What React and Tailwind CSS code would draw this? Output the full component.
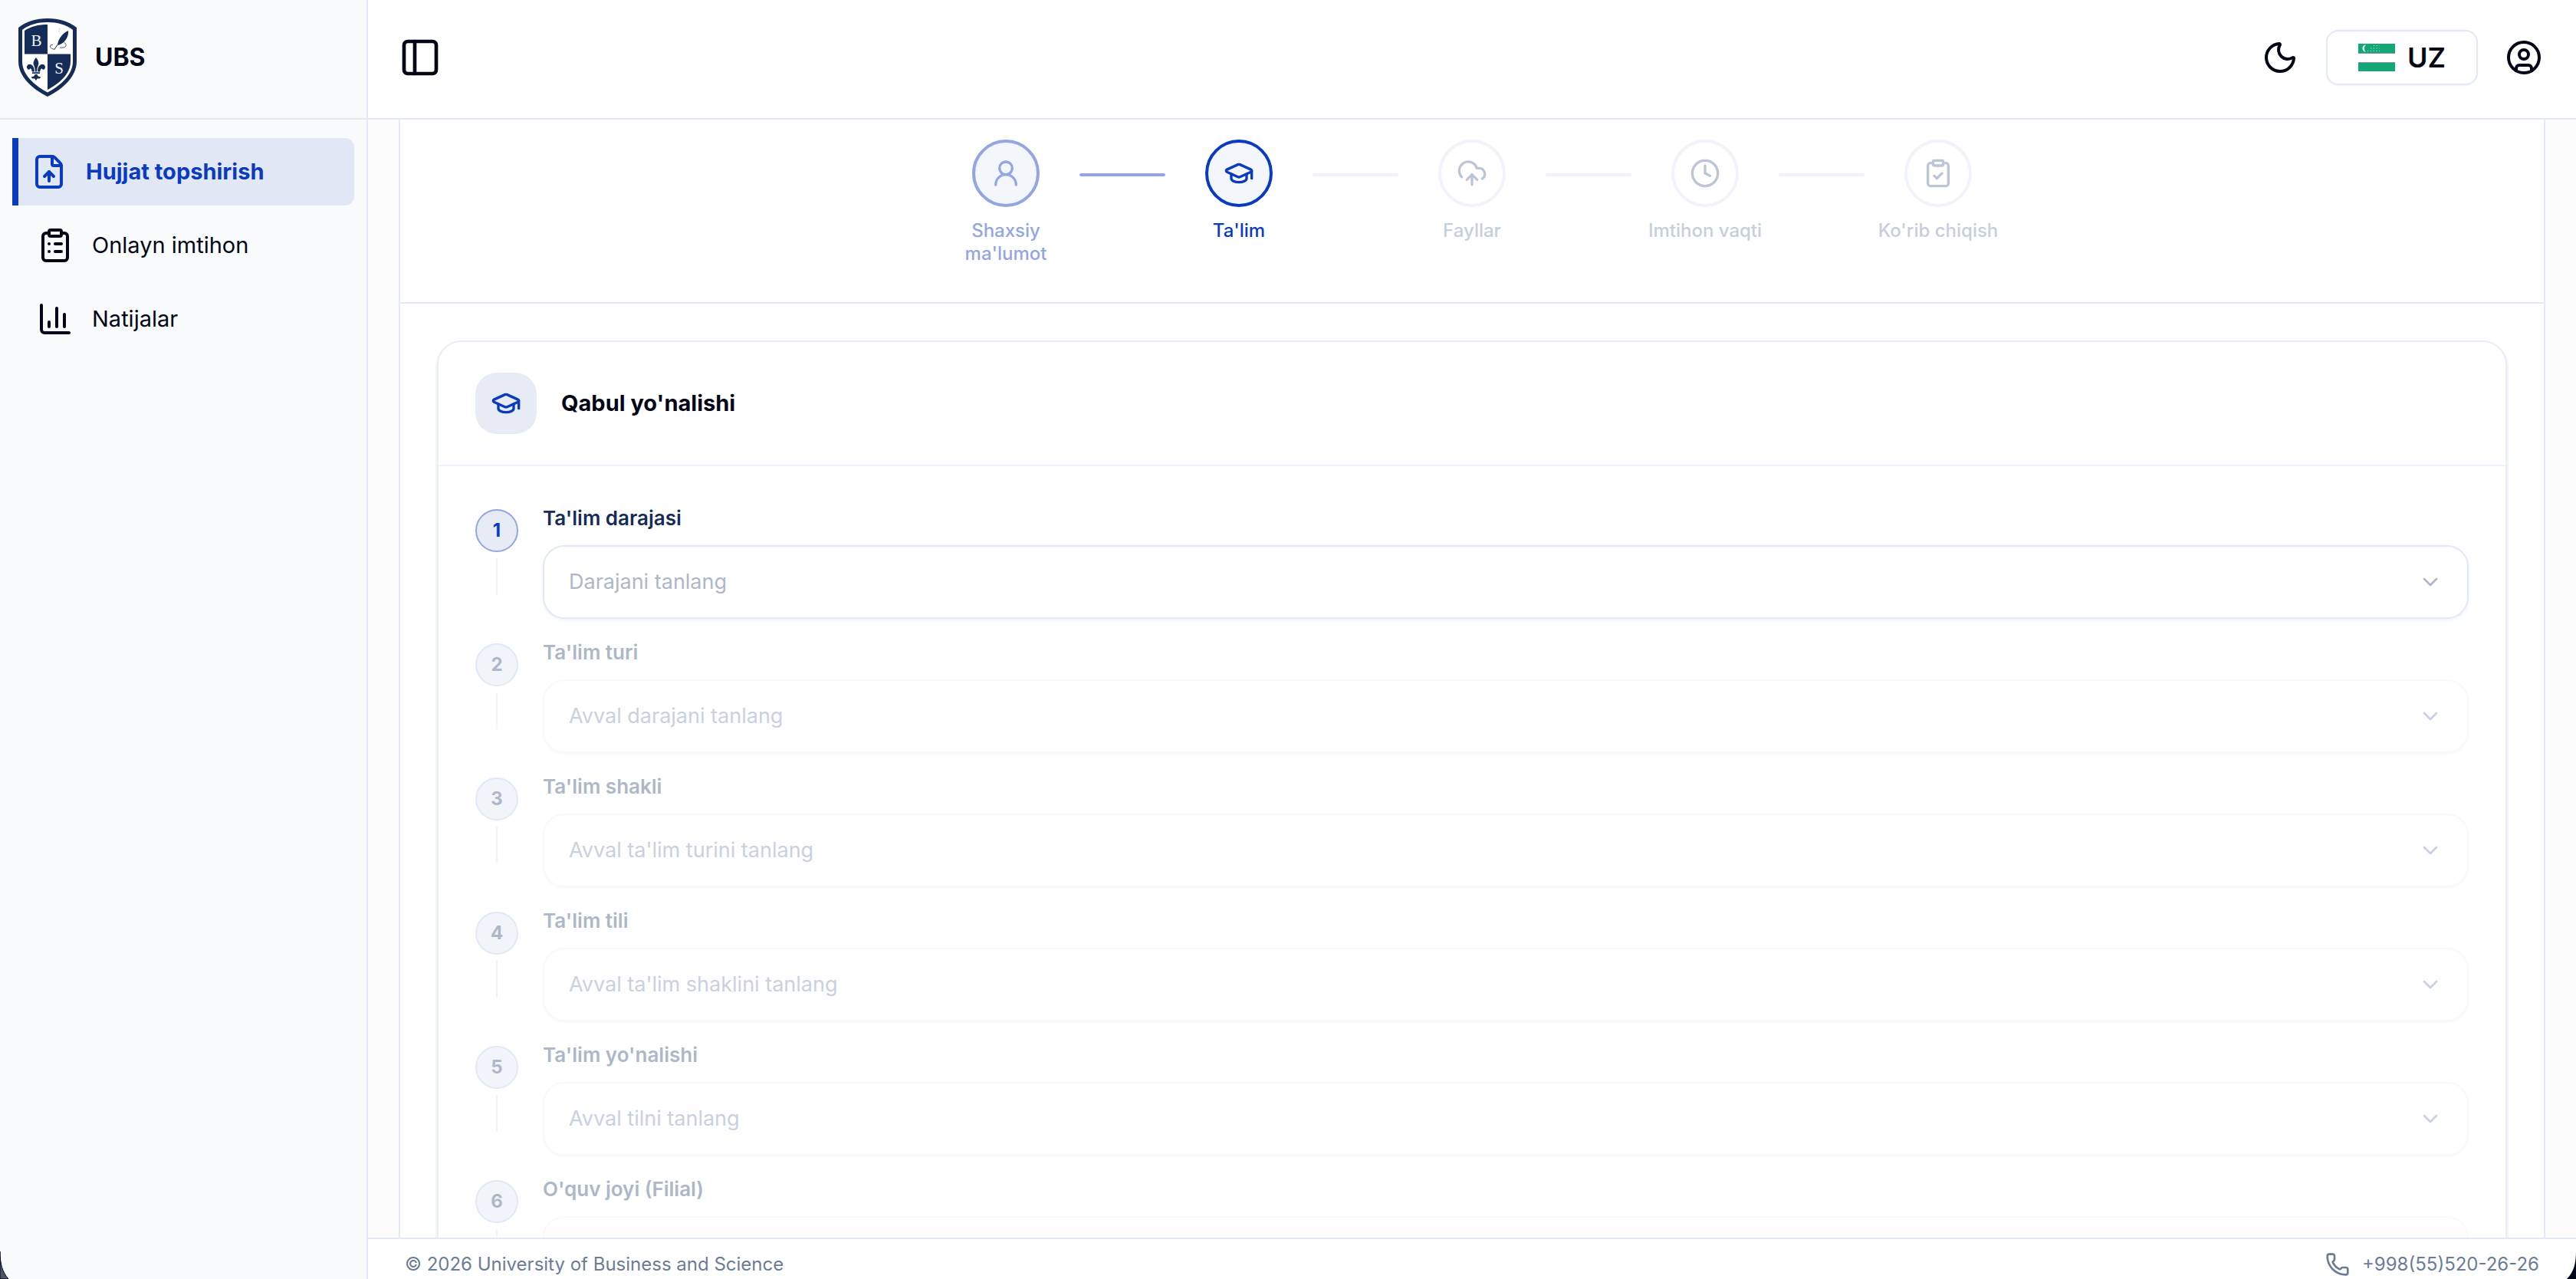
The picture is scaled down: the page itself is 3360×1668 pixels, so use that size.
import {
  ChartColumn,
  ChevronDown,
  CircleUser,
  ClipboardCheck,
  ClipboardList,
  Clock,
  CloudUpload,
  FileUp,
  GraduationCap,
  Moon,
  PanelLeft,
  Phone,
  UserRound,
} from 'lucide-react';
import clsx from 'clsx';

const NAV = [
  { label: 'Hujjat topshirish', icon: FileUp, active: true },
  { label: 'Onlayn imtihon', icon: ClipboardList },
  { label: 'Natijalar', icon: ChartColumn },
];

const STEPS = [
  { label: "Shaxsiy ma'lumot", icon: UserRound, state: 'done' },
  { label: "Ta'lim", icon: GraduationCap, state: 'current' },
  { label: 'Fayllar', icon: CloudUpload, state: 'todo' },
  { label: 'Imtihon vaqti', icon: Clock, state: 'todo' },
  { label: "Ko'rib chiqish", icon: ClipboardCheck, state: 'todo' },
];

const FIELDS = [
  { id: 'degree', label: "Ta'lim darajasi", placeholder: 'Darajani tanlang' },
  { id: 'type', label: "Ta'lim turi", placeholder: 'Avval darajani tanlang' },
  { id: 'form', label: "Ta'lim shakli", placeholder: "Avval ta'lim turini tanlang" },
  { id: 'language', label: "Ta'lim tili", placeholder: "Avval ta'lim shaklini tanlang" },
  { id: 'program', label: "Ta'lim yo'nalishi", placeholder: 'Avval tilni tanlang' },
  { id: 'branch', label: "O'quv joyi (Filial)", placeholder: "Avval yo'nalishni tanlang" },
];

const CIRCLE = {
  done: 'border-[#93a6e2] bg-[#f3f6fb] text-[#93a6e2]',
  current: 'border-[#0a3bbf] bg-[#f3f6fb] text-[#0a3bbf]',
  todo: 'border-[#f0f3f9] bg-white text-[#bcc5d6]',
};

const STEP_LABEL = {
  done: 'text-[#93a6e2]',
  current: 'text-[#0a3bbf]',
  todo: 'text-[#c6cedd]',
};

function Logo() {
  return (
    <svg viewBox="0 0 76 102" className="h-[102px] w-[76px]" fill="#162c58" role="img" aria-label="UBS">
      <path d="M0 12C10 4 23 0 38 0s28 4 38 12v44c0 20-18 36-38 46C18 92 0 76 0 56Z" />
      <path fill="#fff" d="M5 15C14 8 25 5 38 5s24 3 33 10v41c0 17-15 31-33 40.500C20 87 5 73 5 56Z" />
      <path d="M8 16C16 10.500 26 8 38 8v38.500H8Z" />
      <path d="M38 46.500h30V56c0 15-12 27.500-30 37Z" />
      <path fill="none" stroke="#8a94a8" strokeWidth="0.800" d="M8 46.500h60" />
      <text x="23.500" y="35.500" textAnchor="middle" fontFamily="Liberation Serif, serif" fontSize="21" fill="#eef1f7">
        B
      </text>
      <text x="53" y="71.500" textAnchor="middle" fontFamily="Liberation Serif, serif" fontSize="21" fill="#eef1f7">
        S
      </text>
      {/* fleur-de-lis */}
      <path d="M23 51c-3 4-4.500 7-2.500 11 1 2.500 1.400 5 1.400 7.500h2.200c0-2.500.4-5 1.400-7.500 2-4 .5-7-2.500-11Z" />
      <path d="M20.800 69.500c.4-5.500-2.600-9.800-6-9.800-3.300 0-4.500 3.200-3.300 5.600.9 1.800 2.300 1.900 3 .9.700-1 1.900-.8 2.500.3.500 1 .7 2 .7 3Z" />
      <path d="M25.200 69.500c-.4-5.500 2.600-9.800 6-9.800 3.300 0 4.500 3.200 3.300 5.600-.9 1.800-2.300 1.900-3 .9-.7-1-1.900-.8-2.500.3-.5 1-.7 2-.7 3Z" />
      <path d="M18 70.300h10v1.700H18ZM21.500 73h3c.5 2.500 2 3.300 4.200 2.900.4 1.800-.8 3.200-2.600 2.400-1.200-.4-2 .6-3.100 3-1.100-2.400-1.900-3.400-3.100-3-1.800.8-3-.6-2.600-2.400 2.200.4 3.700-.4 4.200-2.900Z" />
      {/* quill */}
      <path d="M65 16c.8 5-2 12-6.500 15.500-2.500 2-5 3-7 3.500-.5-2.500.5-6.500 3-10C57.500 20.500 61 17.500 65 16Z" />
      <path fill="none" stroke="#162c58" strokeWidth="1" d="m46.500 41 5-7.500 7-9" />
      <path
        fill="none"
        stroke="#162c58"
        strokeWidth="0.800"
        d="M46 40c-3-.5-5-2-4.500-4 .3-1.200 1.800-1.800 3.500-1.500M54 38c3 .5 7 .2 8-2 .8-2-1-4-2.500-5"
      />
      <path fill="none" stroke="#8a94a8" strokeWidth="0.700" strokeDasharray="1.500 1.500" d="M54 13c-1.500 2-1.500 5 0 6.500" />
    </svg>
  );
}

function Flag() {
  return (
    <svg viewBox="0 0 48 36" className="h-9 w-12" aria-hidden="true">
      <path fill="#fff" d="M0 0h48v36H0z" />
      <path fill="#12a876" d="M0 0h48v12H0zM0 25h48v11H0z" />
      <path fill="#8b90a8" d="M0 12h48v1H0zM0 24h48v1H0z" />
      <path fill="#fff" d="M10 1.500a4.500 4.500 0 1 0 0 9 5.500 5.500 0 0 1 0-9Z" />
      <path
        fill="none"
        stroke="#c3dcec"
        strokeWidth="1.200"
        strokeDasharray="1.200 2.600"
        d="M20 2.500h8M16 6h12M12 9.500h16"
      />
    </svg>
  );
}

function Sidebar() {
  return (
    <aside className="flex w-[480px] shrink-0 flex-col border-r-2 border-[#e2e8f4] bg-[#f9fafc]">
      <div className="flex h-[156px] shrink-0 items-center gap-6 border-b-2 border-[#e2e8f4] px-6 pb-1">
        <Logo />
        <span className="text-[32px] font-bold text-[#020617]">UBS</span>
      </div>
      <nav className="flex flex-col gap-2 px-4 py-6">
        {NAV.map(({ label, icon: Icon, active }) => (
          <a
            key={label}
            href="#"
            className={clsx(
              'flex h-[88px] items-center gap-6 text-[29px]',
              active
                ? 'rounded-r-xl border-l-8 border-[#0a3bbf] bg-[#e1e7f4] px-4 font-bold text-[#0a3bbf]'
                : 'rounded-xl px-8 text-[#020617]',
            )}
          >
            <Icon className="size-12 shrink-0" />
            {label}
          </a>
        ))}
      </nav>
    </aside>
  );
}

function Header() {
  return (
    <header className="flex h-[156px] shrink-0 items-center justify-between border-b-2 border-[#e2e8f4] bg-white pr-11 pb-1 pl-10 text-[#020617]">
      <button type="button" aria-label="Menyu">
        <PanelLeft className="size-14" />
      </button>
      <div className="flex items-center gap-9">
        <button type="button" aria-label="Mavzu">
          <Moon className="size-12" />
        </button>
        <button
          type="button"
          className="flex h-[72px] items-center gap-4 rounded-2xl border-2 border-[#e2e8f4] bg-white px-10 text-4xl font-semibold shadow-xs"
        >
          <Flag />
          UZ
        </button>
        <button type="button" aria-label="Profil">
          <CircleUser className="size-12" />
        </button>
      </div>
    </header>
  );
}

function Stepper() {
  return (
    <ol className="flex justify-center border-b-2 border-[#e2e8f4] pt-[26px] pb-12">
      {STEPS.map(({ label, icon: Icon, state }, i) => (
        <li key={label} className="flex">
          {i > 0 && (
            <span
              className={clsx(
                'mx-4 mt-11 h-1 w-28 rounded-full',
                STEPS[i - 1].state === 'done' ? 'bg-[#93a6e2]' : 'bg-[#f0f3f9]',
              )}
            />
          )}
          <div className="flex w-40 flex-col items-center gap-4">
            <span className={clsx('flex size-[88px] items-center justify-center rounded-full border-4', CIRCLE[state])}>
              <Icon className="size-10" />
            </span>
            <span className={clsx('text-center text-2xl leading-[30px] font-medium', STEP_LABEL[state])}>{label}</span>
          </div>
        </li>
      ))}
    </ol>
  );
}

function Field({ field, number }) {
  const enabled = number === 1;
  return (
    <div className="flex gap-8">
      <div className="flex flex-col items-center gap-2 pt-2">
        <span
          className={clsx(
            'flex size-14 items-center justify-center rounded-full border-2 text-2xl font-bold',
            enabled ? 'border-[#93a6e2] bg-[#e6ebf6] text-[#0a3bbf]' : 'border-[#e2e8f4] bg-[#f1f4f9] text-[#adb7c8]',
          )}
        >
          {number}
        </span>
        <span className="h-12 w-0.5 bg-[#f0f3f9]" />
      </div>
      <div className="flex-1">
        <label
          htmlFor={field.id}
          className={clsx(
            'mb-4 block text-[26px] leading-[39px] font-semibold',
            enabled ? 'text-[#162c58]' : 'text-[#adb7c8]',
          )}
        >
          {field.label}
        </label>
        <div className="relative">
          <select
            id={field.id}
            disabled={!enabled}
            className={clsx(
              'block h-24 w-full appearance-none rounded-[28px] border-2 px-8 text-[27px] disabled:opacity-100',
              enabled
                ? 'border-[#e2e8f4] bg-white text-[#adb7c8] shadow-[0_2px_4px_#eef2f9]'
                : 'border-[#f9f9fb] bg-[#fefefe] text-[#c9d1e0] shadow-[0_2px_4px_#f7f9fc]',
            )}
          >
            <option>{field.placeholder}</option>
          </select>
          <ChevronDown
            className={clsx(
              'pointer-events-none absolute inset-y-0 right-[34px] my-auto size-8',
              enabled ? 'text-[#adb7c8]' : 'text-[#c9d1e0]',
            )}
          />
        </div>
      </div>
    </div>
  );
}

function AdmissionCard() {
  return (
    <section className="rounded-[32px] border-2 border-[#e9eef7] bg-white shadow-[0_2px_0_2px_#f1f5fb]">
      <div className="flex items-center gap-8 border-b-2 border-[#edf1f8] px-12 py-10">
        <span className="flex size-20 items-center justify-center rounded-[28px] bg-[#e6ebf6] text-[#0a3bbf]">
          <GraduationCap className="size-10" />
        </span>
        <h2 className="text-[29px] font-bold text-[#020617]">Qabul yo'nalishi</h2>
      </div>
      <div className="flex flex-col gap-6 p-12">
        {FIELDS.map((field, i) => (
          <Field key={field.id} field={field} number={i + 1} />
        ))}
      </div>
    </section>
  );
}

function Footer() {
  return (
    <footer className="flex shrink-0 justify-between border-t-2 border-[#e2e8f4] bg-white px-12 pt-4 pb-0.5 text-2xl leading-[34px] text-[#6b7c96]">
      <span>© 2026 University of Business and Science</span>
      <a href="tel:+998555202626" className="flex items-center gap-4">
        <Phone className="size-8" />
        +998(55)520-26-26
      </a>
    </footer>
  );
}

export default function App() {
  return (
    <div className="relative flex h-screen overflow-hidden bg-white font-[Inter,sans-serif]">
      <Sidebar />
      <div className="flex min-w-0 flex-1 flex-col">
        <Header />
        <main className="min-h-0 flex-1 overflow-hidden bg-[#fcfcfc] px-10">
          <div className="border-x-2 border-[#e2e8f4] bg-white">
            <Stepper />
            <div className="p-12">
              <AdmissionCard />
            </div>
          </div>
        </main>
        <Footer />
      </div>
      {/* rounded window corners */}
      <svg viewBox="0 0 12 36" className="absolute bottom-0 left-0 h-9 w-3" aria-hidden="true">
        <path fill="#4b5563" stroke="#020617" strokeWidth="1" d="M0 0C0 16 3 27 11 36H0Z" />
      </svg>
      <svg viewBox="0 0 12 36" className="absolute right-0 bottom-0 h-9 w-3" aria-hidden="true">
        <path fill="#020617" d="M12 0C12 16 9 27 0 36h12Z" />
      </svg>
    </div>
  );
}
